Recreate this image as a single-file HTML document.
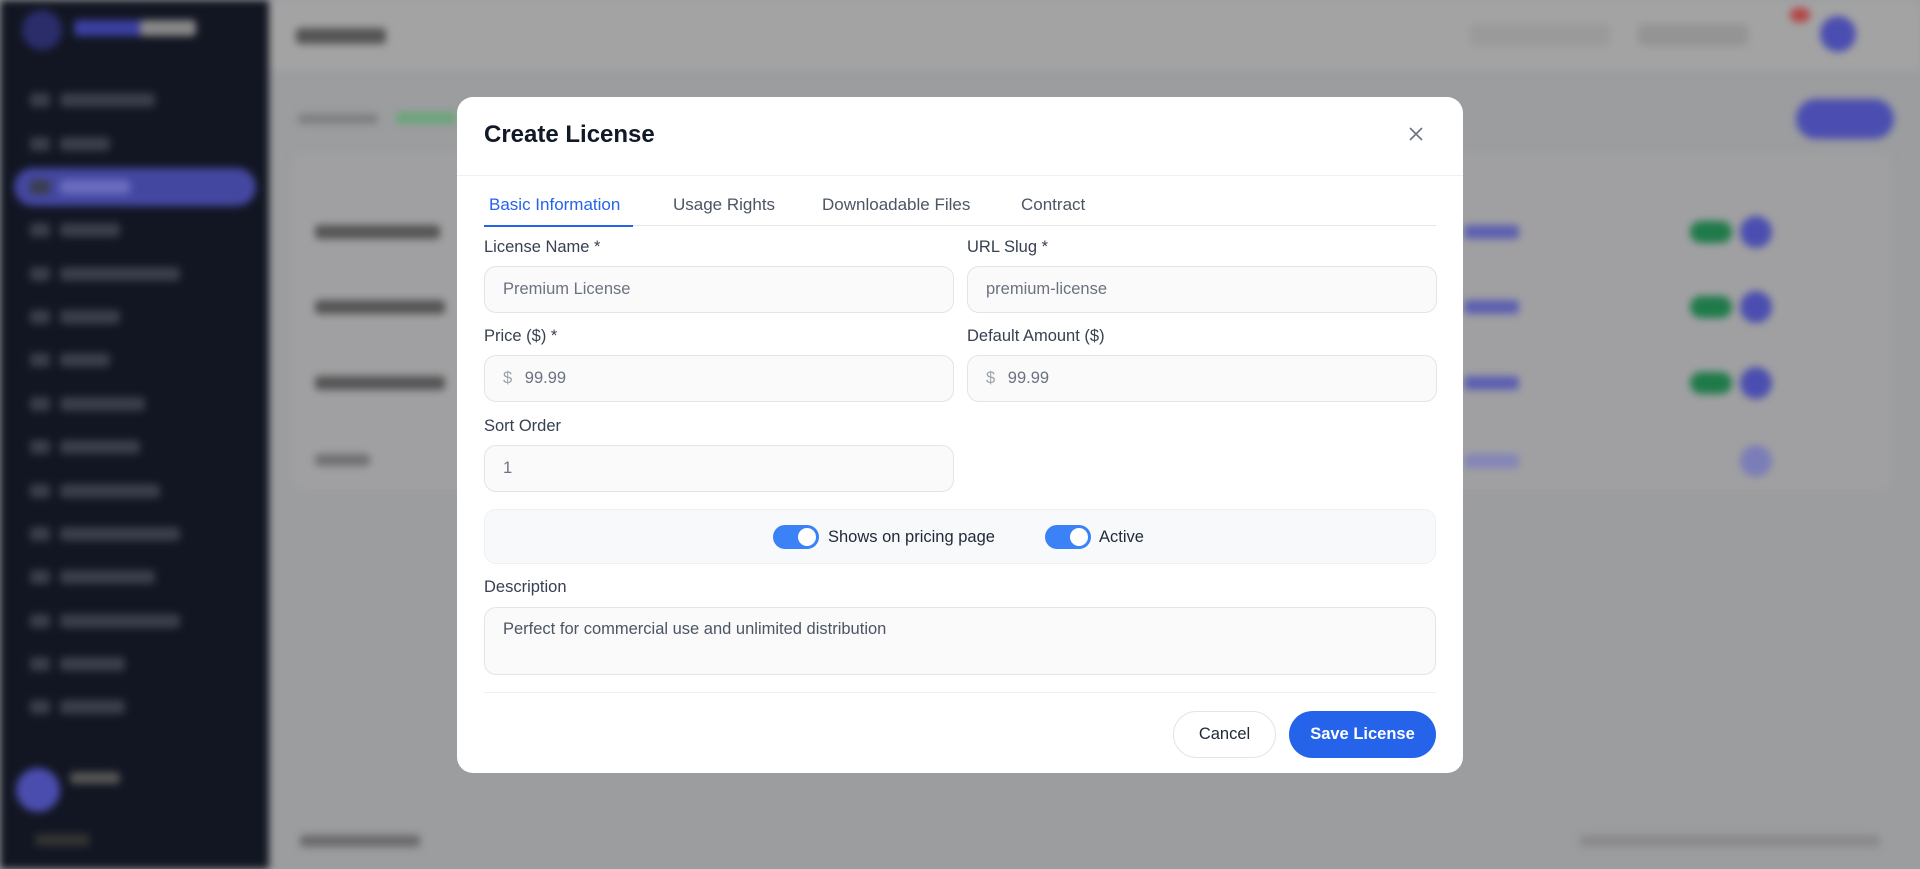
<!DOCTYPE html>
<html><head><meta charset="utf-8"><style>
*{box-sizing:border-box;margin:0;padding:0}
html,body{width:1920px;height:869px;overflow:hidden}
body{font-family:"Liberation Sans",sans-serif;background:#9c9d9f;position:relative}
#bg{position:absolute;left:0;top:0;width:1920px;height:869px;filter:blur(4px);overflow:hidden}
.sb{position:absolute;left:0;top:0;width:269px;height:869px;background:#121622}
.sb .it{position:absolute;left:60px;height:14px;background:#3a3e4a;border-radius:4px}
.sb .ic{position:absolute;left:30px;width:20px;height:14px;background:#3a3e4a;border-radius:3px}
.top{position:absolute;left:269px;top:0;right:0;height:70px;background:#a3a3a4}
.card{position:absolute;left:292px;top:153px;width:1600px;height:337px;background:#a0a0a2;border-radius:10px}
.gray{position:absolute;height:14px;background:#7d7e80;border-radius:4px}
.blue{position:absolute;height:14px;background:#5c5fb0;border-radius:4px}
.gt{position:absolute;left:1690px;width:42px;height:22px;border-radius:11px;background:#1f7a4a}
.bc{position:absolute;left:1740px;width:32px;height:32px;border-radius:50%;background:#4b4eb0}
.modal{position:absolute;left:457px;top:97px;width:1006px;height:676px;background:#fff;border-radius:16px}
.title{position:absolute;left:27px;top:24px;font-size:24px;font-weight:bold;color:#111827}
.hd{position:absolute;left:0;right:0;top:78px;border-top:1px solid #eef0f3}
.x{position:absolute;left:950px;top:28px}
.tabs{position:absolute;left:27px;right:27px;top:96px;height:33px;border-bottom:1px solid #e5e7eb}
.tab{position:absolute;top:2px;font-size:17px;color:#4b5563}
.tab.a{color:#2563eb}
.ul{position:absolute;left:0;width:149px;bottom:-2px;height:2px;background:#2563eb}
.lb{position:absolute;font-size:16.5px;color:#374151}
.in{position:absolute;height:47px;width:470px;border:1px solid #e2e4e8;border-radius:12px;background:#fafafa;font-size:16.5px;color:#6b7280;padding:0 18px;line-height:45px}
.in .d{color:#9ca3af;margin-right:8px}
.panel{position:absolute;left:27px;width:952px;top:412px;height:55px;background:#f8f9fb;border:1px solid #eef0f3;border-radius:12px}
.tg{position:absolute;top:15px;width:46px;height:24px;border-radius:12px;background:#3b82f6}
.tg::after{content:"";position:absolute;right:3px;top:3px;width:18px;height:18px;border-radius:50%;background:#fff}
.tt{position:absolute;top:15px;line-height:24px;font-size:16.5px;color:#1f2937}
.ta{position:absolute;left:27px;top:510px;width:952px;height:68px;border:1px solid #e2e4e8;border-radius:12px;background:#fafafa;font-size:16.5px;color:#4b5563;padding:12px 18px}
.fd{position:absolute;left:27px;right:27px;top:595px;border-top:1px solid #eef0f3}
.btn{position:absolute;top:614px;height:47px;border-radius:24px;font-size:16.5px;line-height:47px;text-align:center}
</style></head><body>
<div id="bg">
<div class="sb">
<div style="position:absolute;left:22px;top:10px;width:40px;height:40px;border-radius:50%;background:#2a2d6a"></div>
<div style="position:absolute;left:74px;top:20px;width:70px;height:16px;background:#3b3fa0;border-radius:4px"></div>
<div style="position:absolute;left:140px;top:20px;width:56px;height:16px;background:#888;border-radius:4px"></div>
<div style="position:absolute;left:14px;top:168px;width:242px;height:38px;border-radius:19px;background:#4447a0"></div>
<div class="ic" style="top:93px"></div><div class="it" style="top:93px;width:95px"></div>
<div class="ic" style="top:137px"></div><div class="it" style="top:137px;width:50px"></div>
<div class="ic" style="top:180px"></div><div class="it" style="top:180px;width:70px;background:#6a6dc0"></div>
<div class="ic" style="top:223px"></div><div class="it" style="top:223px;width:60px"></div>
<div class="ic" style="top:267px"></div><div class="it" style="top:267px;width:120px"></div>
<div class="ic" style="top:310px"></div><div class="it" style="top:310px;width:60px"></div>
<div class="ic" style="top:353px"></div><div class="it" style="top:353px;width:50px"></div>
<div class="ic" style="top:397px"></div><div class="it" style="top:397px;width:85px"></div>
<div class="ic" style="top:440px"></div><div class="it" style="top:440px;width:80px"></div>
<div class="ic" style="top:484px"></div><div class="it" style="top:484px;width:100px"></div>
<div class="ic" style="top:527px"></div><div class="it" style="top:527px;width:120px"></div>
<div class="ic" style="top:570px"></div><div class="it" style="top:570px;width:95px"></div>
<div class="ic" style="top:614px"></div><div class="it" style="top:614px;width:120px"></div>
<div class="ic" style="top:657px"></div><div class="it" style="top:657px;width:65px"></div>
<div class="ic" style="top:700px"></div><div class="it" style="top:700px;width:65px"></div>
<div style="position:absolute;left:16px;top:768px;width:44px;height:44px;border-radius:50%;background:#4a4dae"></div>
<div style="position:absolute;left:70px;top:772px;width:50px;height:12px;background:#555;border-radius:4px"></div>
<div style="position:absolute;left:35px;top:834px;width:55px;height:12px;background:#333;border-radius:4px"></div>
</div>
<div class="top"></div>
<div class="gray" style="left:296px;top:28px;width:90px;height:16px;background:#555"></div>
<div class="gray" style="left:1470px;top:24px;width:140px;height:22px;background:#9a9a9b"></div>
<div class="gray" style="left:1638px;top:24px;width:110px;height:22px;background:#949495"></div>
<div class="card"></div>
<div class="gray" style="left:298px;top:114px;width:80px;height:10px"></div>
<div class="gray" style="left:396px;top:112px;width:60px;height:12px;background:#6aa57a"></div>
<div class="gray" style="left:315px;top:225px;width:125px;height:14px;background:#555"></div>
<div class="gray" style="left:315px;top:300px;width:130px;height:14px;background:#555"></div>
<div class="gray" style="left:315px;top:376px;width:130px;height:14px;background:#555"></div>
<div class="gray" style="left:315px;top:454px;width:55px;height:12px;background:#707072"></div>
<div class="blue" style="left:1464px;top:225px;width:55px"></div>
<div class="blue" style="left:1464px;top:300px;width:55px"></div>
<div class="blue" style="left:1464px;top:376px;width:55px"></div>
<div class="blue" style="left:1464px;top:454px;width:55px;background:#8385b8"></div>
<div class="gt" style="top:221px"></div><div class="gt" style="top:296px"></div><div class="gt" style="top:372px"></div>
<div class="bc" style="top:216px"></div><div class="bc" style="top:291px"></div><div class="bc" style="top:367px"></div>
<div class="bc" style="top:445px;background:#7b7db8"></div>
<div style="position:absolute;left:1796px;top:99px;width:98px;height:40px;border-radius:20px;background:#4b4eb0"></div>
<div style="position:absolute;left:1820px;top:16px;width:36px;height:36px;border-radius:50%;background:#4b4eb0"></div>
<div style="position:absolute;left:1790px;top:8px;width:20px;height:14px;border-radius:7px;background:#b54444"></div>
<div style="position:absolute;left:300px;top:835px;width:120px;height:12px;background:#6a6a6c;border-radius:4px"></div>
<div style="position:absolute;left:1580px;top:835px;width:300px;height:12px;background:#8a8a8c;border-radius:4px"></div>
</div>
<div class="modal">
<div class="title">Create License</div>
<svg class="x" width="18" height="18" viewBox="0 0 18 18"><path d="M3 3L15 15M15 3L3 15" stroke="#6b7280" stroke-width="1.6" fill="none"/></svg>
<div class="hd"></div>
<div class="tabs">
<div class="tab a" style="left:5px">Basic Information</div>
<div class="tab" style="left:189px">Usage Rights</div>
<div class="tab" style="left:338px">Downloadable Files</div>
<div class="tab" style="left:537px">Contract</div>
<div class="ul"></div>
</div>
<div class="lb" style="left:27px;top:141px">License Name *</div>
<div class="lb" style="left:510px;top:141px">URL Slug *</div>
<div class="in" style="left:27px;top:169px">Premium License</div>
<div class="in" style="left:510px;top:169px">premium-license</div>
<div class="lb" style="left:27px;top:230px">Price ($) *</div>
<div class="lb" style="left:510px;top:230px">Default Amount ($)</div>
<div class="in" style="left:27px;top:258px"><span class="d">$</span> 99.99</div>
<div class="in" style="left:510px;top:258px"><span class="d">$</span> 99.99</div>
<div class="lb" style="left:27px;top:320px">Sort Order</div>
<div class="in" style="left:27px;top:348px">1</div>
<div class="panel">
<div class="tg" style="left:288px"></div><div class="tt" style="left:343px">Shows on pricing page</div>
<div class="tg" style="left:560px"></div><div class="tt" style="left:614px">Active</div>
</div>
<div class="lb" style="left:27px;top:481px">Description</div>
<div class="ta">Perfect for commercial use and unlimited distribution</div>
<div class="fd"></div>
<div class="btn" style="left:716px;width:103px;border:1px solid #e2e4e8;color:#1f2937;line-height:45px">Cancel</div>
<div class="btn" style="left:832px;width:147px;background:#2563eb;color:#fff;font-weight:bold">Save License</div>
</div>
</body></html>
